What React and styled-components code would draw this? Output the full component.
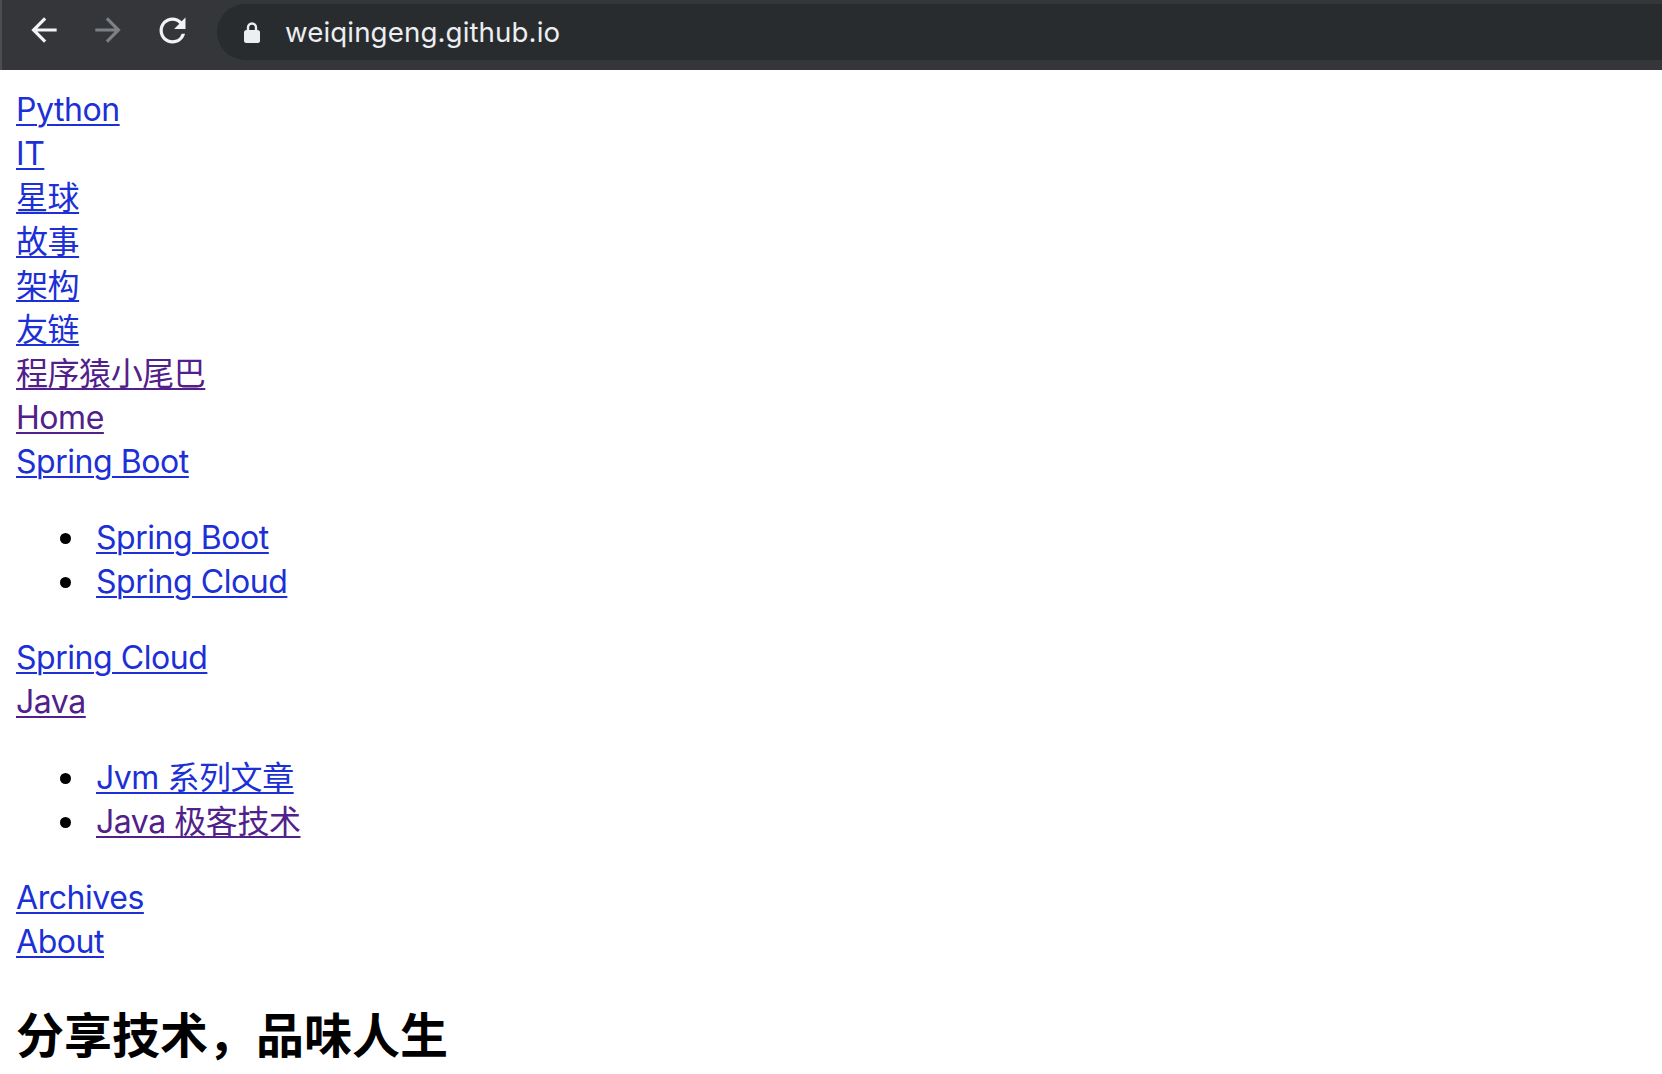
import React from "react";
import styled, { createGlobalStyle } from "styled-components";

const GlobalStyle = createGlobalStyle`
  html, body {
    margin: 0;
    padding: 0;
    background: #ffffff;
  }
`;

const BrowserBar = styled.header`
  display: flex;
  align-items: flex-start;
  height: 70px;
  padding: 4px 0 0 10px;
  box-sizing: border-box;
  background-color: #35363a;
  border-left: 2px solid #4a4d51;
`;

const NavButton = styled.div`
  width: 64px;
  height: 56px;
  display: flex;
  align-items: center;
  justify-content: center;
  color: ${(p) => (p.$disabled ? "#7d8084" : "#f1f3f4")};
  margin-top: -2px;
`;

const UrlPill = styled.div`
  flex: 1;
  height: 56px;
  margin-left: 13px;
  padding-left: 27px;
  display: flex;
  align-items: center;
  gap: 25px;
  background-color: #292c2f;
  border-radius: 28px 0 0 28px;
`;

const UrlText = styled.span`
  font-family: Inter, "Liberation Sans", sans-serif;
  font-size: 27.7px;
  color: #eceef1;
  letter-spacing: 0.1px;
`;

const Page = styled.main`
  padding: 18px 16px 16px;
  font-family: Inter, "Noto Sans CJK SC", sans-serif;
  font-size: 32px;
  line-height: 44px;
  letter-spacing: -0.45px;
  color: #000;
`;

const NavLink = styled.a`
  display: block;
  width: fit-content;
  color: ${(p) => (p.$visited ? "#52208a" : "#1c30d6")};
  text-decoration: underline;
  text-decoration-thickness: 2px;
  text-underline-offset: 3px;
`;

const SubList = styled.ul`
  margin: 32px 0;
  padding-left: 80px;
  list-style: none;
`;

const SubItem = styled.li`
  position: relative;

  &::before {
    content: "";
    position: absolute;
    left: -36px;
    top: 17px;
    width: 11px;
    height: 11px;
    border-radius: 50%;
    background: #000;
  }

  & > a {
    display: inline;
  }
`;

const Tagline = styled.section`
  h1 {
    font-family: "Noto Sans CJK SC", sans-serif;
    font-size: 48px;
    font-weight: 700;
    line-height: 60px;
    letter-spacing: 0;
    margin: 38px 0 0;
  }
`;

const ArrowIcon = ({ flip }) => (
  <svg
    width="38"
    height="38"
    viewBox="0 0 24 24"
    style={flip ? { transform: "scaleX(-1)" } : undefined}
  >
    <path
      fill="currentColor"
      d="M20 11H7.83l5.59-5.59L12 4l-8 8 8 8 1.41-1.41L7.83 13H20v-2z"
    />
  </svg>
);

const ReloadIcon = () => (
  <svg width="39" height="39" viewBox="0 0 24 24">
    <path
      fill="currentColor"
      d="M17.65 6.35A7.958 7.958 0 0 0 12 4c-4.42 0-7.99 3.58-7.99 8s3.57 8 7.99 8c3.73 0 6.84-2.55 7.73-6h-2.08A5.990 5.990 0 0 1 12 18c-3.31 0-6-2.69-6-6s2.69-6 6-6c1.66 0 3.14.69 4.22 1.78L13 11h7V4l-2.35 2.35z"
    />
  </svg>
);

const LockIcon = () => (
  <svg width="16" height="22" viewBox="0 0 16 22">
    <path
      d="M4 9V6.5a4 4 0 0 1 8 0V9"
      fill="none"
      stroke="#eceef1"
      strokeWidth="2.4"
    />
    <rect x="0" y="9" width="16" height="13" rx="2.5" fill="#eceef1" />
  </svg>
);

const App = () => {
  const topLinks = [
    { label: "Python" },
    { label: "IT" },
    { label: "星球" },
    { label: "故事" },
    { label: "架构" },
    { label: "友链" },
    { label: "程序猿小尾巴", visited: true },
    { label: "Home", visited: true },
  ];

  const groups = [
    {
      label: "Spring Boot",
      children: [{ label: "Spring Boot" }, { label: "Spring Cloud" }],
    },
    { label: "Spring Cloud" },
    {
      label: "Java",
      visited: true,
      children: [
        { label: "Jvm 系列文章" },
        { label: "Java 极客技术", visited: true },
      ],
    },
    { label: "Archives" },
    { label: "About" },
  ];

  return (
    <>
      <GlobalStyle />
      <BrowserBar>
        <NavButton>
          <ArrowIcon />
        </NavButton>
        <NavButton $disabled>
          <ArrowIcon flip />
        </NavButton>
        <NavButton>
          <ReloadIcon />
        </NavButton>
        <UrlPill>
          <LockIcon />
          <UrlText>weiqingeng.github.io</UrlText>
        </UrlPill>
      </BrowserBar>

      <Page>
        <nav>
          {topLinks.map((link) => (
            <NavLink key={link.label} href="#" $visited={link.visited}>
              {link.label}
            </NavLink>
          ))}
          {groups.map((group) => (
            <React.Fragment key={group.label + (group.children ? "-g" : "")}>
              <NavLink href="#" $visited={group.visited}>
                {group.label}
              </NavLink>
              {group.children && (
                <SubList>
                  {group.children.map((child) => (
                    <SubItem key={child.label}>
                      <NavLink href="#" $visited={child.visited}>
                        {child.label}
                      </NavLink>
                    </SubItem>
                  ))}
                </SubList>
              )}
            </React.Fragment>
          ))}
        </nav>
        <Tagline>
          <h1>分享技术，品味人生</h1>
        </Tagline>
      </Page>
    </>
  );
};

export default App;
